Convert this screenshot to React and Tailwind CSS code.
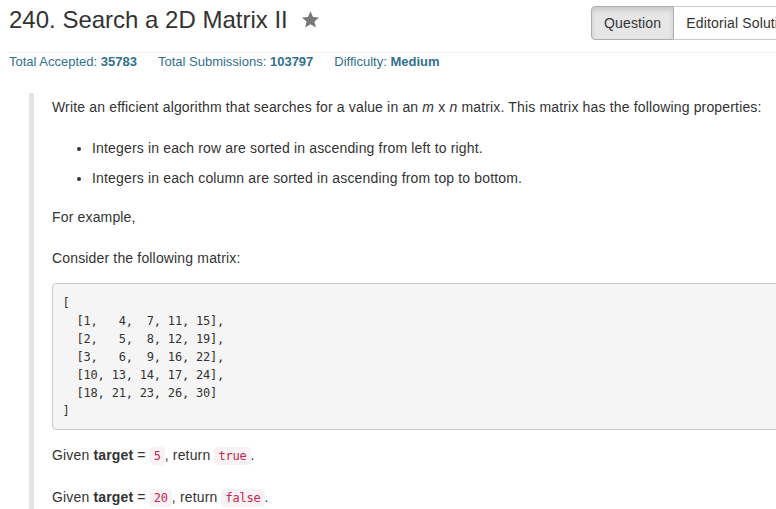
import React from 'react';

const StarIcon = () => (
  <svg viewBox="0 0 24 24" className="w-[19px] h-[19px] fill-[#777]">
    <path d="M12 1.6l3.2 7.1 7.6.7-5.8 5.1 1.8 7.6L12 18.1l-6.8 4 1.8-7.6-5.8-5.1 7.6-.7z" />
  </svg>
);

const Code = ({ children }) => (
  <code className="px-[4px] py-[2px] rounded-[4px] bg-[#f9f2f4] text-[#c7254e] text-[12px] tracking-[-0.2px] font-['DejaVu_Sans_Mono',monospace]">
    {children}
  </code>
);

const matrix = `[
  [1,   4,  7, 11, 15],
  [2,   5,  8, 12, 19],
  [3,   6,  9, 16, 22],
  [10, 13, 14, 17, 24],
  [18, 21, 23, 26, 30]
]`;

export default function App() {
  return (
    <div className="w-[776px] h-[509px] overflow-hidden bg-white font-['Liberation_Sans',Arial,sans-serif] text-[#333]">
      <div className="w-[828px] pl-[9px] pr-[21px] pt-[6px]">
        {/* Header */}
        <div className="flex items-start">
          <h3 className="flex items-center flex-1 text-[24px] leading-[27px] font-normal">
            <span>240. Search a 2D Matrix II</span>
            <span className="ml-[13px]">
              <StarIcon />
            </span>
          </h3>
          <div className="flex shrink-0 text-[14px] leading-[20px] tracking-[0.15px]">
            <button className="px-[12px] py-[6px] border border-[#adadad] bg-[#e6e6e6] rounded-l-[4px] shadow-[inset_0_3px_5px_rgba(0,0,0,0.125)]">
              Question
            </button>
            <button className="px-[12px] py-[6px] border border-l-0 border-[#ccc] bg-white rounded-r-[4px]">
              Editorial Solution
            </button>
          </div>
        </div>

        {/* Stats */}
        <div className="mt-[12px] border-t border-[#eee] text-[13px] leading-[17px] text-[#31708f] flex gap-[21px]">
          <span>Total Accepted: <b>35783</b></span>
          <span>Total Submissions: <b>103797</b></span>
          <span>Difficulty: <b>Medium</b></span>
        </div>

        {/* Question body */}
        <div className="mt-[23px] ml-[20px] border-l-[5px] border-[#e3e3e3] pl-[18px] pt-[4px] pb-[10px] text-[14px] leading-[20px] tracking-[0.16px]">
          <p>
            Write an efficient algorithm that searches for a value in an <em>m</em> x <em>n</em> matrix. This matrix has the following properties:
          </p>
          <ul className="mt-[21px] pl-[40px] list-disc flex flex-col gap-[10px]">
            <li>Integers in each row are sorted in ascending from left to right.</li>
            <li>Integers in each column are sorted in ascending from top to bottom.</li>
          </ul>
          <p className="mt-[19px]">For example,</p>
          <p className="mt-[21px]">Consider the following matrix:</p>
          <pre className="mt-[15px] p-[9.5px] bg-[#f5f5f5] border border-[#ccc] rounded-[4px] text-[12px] tracking-[-0.2px] leading-[18px] font-['DejaVu_Sans_Mono',monospace] text-[#333]">
            {matrix}
          </pre>
          <p className="mt-[15px]">
            Given <b>target</b> = <Code>5</Code>, return <Code>true</Code>.
          </p>
          <p className="mt-[21px]">
            Given <b>target</b> = <Code>20</Code>, return <Code>false</Code>.
          </p>
        </div>
      </div>
    </div>
  );
}
